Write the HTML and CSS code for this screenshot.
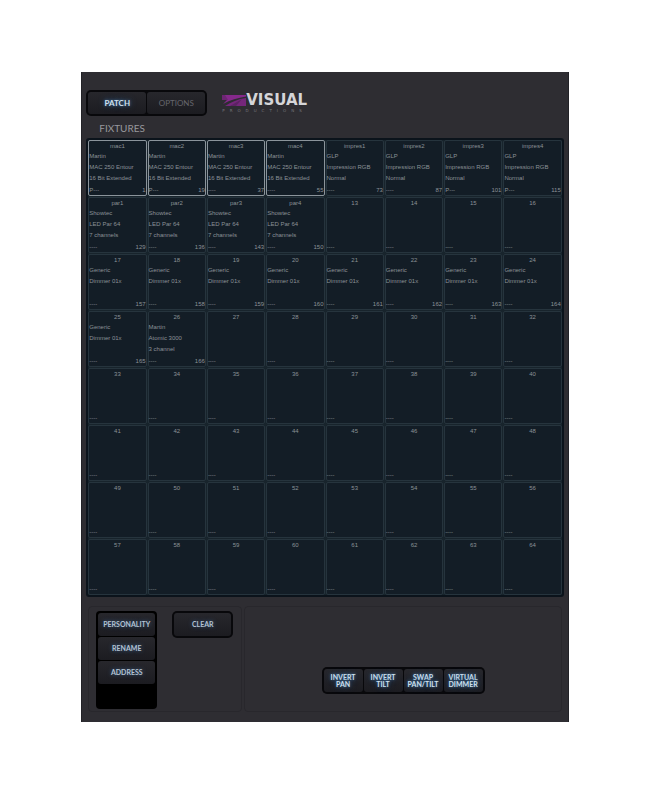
FILE: index.html
```
<!DOCTYPE html>
<html lang="en">
<head>
    <meta charset="UTF-8">
    <meta name="viewport" content="width=device-width, initial-scale=1.0">
    <title>Visual Productions - Patch</title>
    <link rel="stylesheet" href="styles.css">
</head>
<body>

<main class="app">
    <header class="topbar">
        <nav class="tabs">
            <button type="button" class="key lit">PATCH</button>
            <button type="button" class="key dim">OPTIONS</button>
        </nav>
        <div class="logo">
            <div class="logo-top">
                <svg class="logo-mark" viewBox="0 0 24 11" aria-hidden="true">
                    <path d="M0 0H24V1.500C16 3 8 5 1 9L5 5H0Z" fill="#85298b"/>
                    <path d="M0 0H3L6 5H0Z" fill="#6d2673"/>
                    <path d="M3 11C9 7 16 4 24 3V11Z" fill="#75277b"/>
                    <path d="M8 11L20 4L14 11Z" fill="#5c2362"/>
                </svg>
                <span class="logo-name">VISUAL</span>
            </div>
            <div class="logo-sub">PRODUCTIONS</div>
        </div>
    </header>

    <h1 class="title">FIXTURES</h1>
    <div class="grid" id="grid"></div>

    <section class="controls">
        <div class="panel edit">
            <div class="stack">
                <button type="button" class="key">PERSONALITY</button>
                <button type="button" class="key">RENAME</button>
                <button type="button" class="key">ADDRESS</button>
            </div>
            <div class="single">
                <button type="button" class="key">CLEAR</button>
            </div>
        </div>
        <div class="panel flags">
            <div class="row">
                <button type="button" class="key lit">INVERT<br>PAN</button>
                <button type="button" class="key lit">INVERT<br>TILT</button>
                <button type="button" class="key lit">SWAP<br>PAN/TILT</button>
                <button type="button" class="key lit">VIRTUAL<br>DIMMER</button>
            </div>
        </div>
    </section>
</main>

<script src="script.js"></script>
</body>
</html>
```
FILE: styles.css
```
* {
    box-sizing: border-box;
}
body {
    margin: 0;
    background: #fff;
    font-family: Lato, "Open Sans", sans-serif;
}
button {
    margin: 0;
    padding: 0;
    border: none;
    font-family: inherit;
    cursor: pointer;
}
.app {
    width: 75%;
    margin: 72px auto;
    padding: 18px 4px 10px;
    background: #2e2d32;
    border: solid #222227;
    border-width: 0 1px;
}

/* top bar */
.topbar {
    display: flex;
    align-items: center;
    gap: 15px;
}
.tabs, .row {
    display: flex;
    gap: 1px;
    padding: 2px;
    background: #08080b;
    border-radius: 5px;
}
.key {
    height: 23px;
    background: linear-gradient(#27272c, #1c1c21);
    border-radius: 3px;
    color: #b4c2d2;
    font-size: 7px;
    font-weight: bold;
    line-height: 7px;
    text-shadow: 0 0 4px #3a6090;
}
.tabs .key {
    width: 58px;
    height: 22px;
    font-size: 8px;
}
.key.lit {
    color: #cfe0ef;
    text-shadow: 0 0 3px #47759f, 0 0 6px #2f5688;
}
.tabs .key.dim {
    color: #66666d;
    font-weight: normal;
    font-size: 8px;
    text-shadow: none;
}
.logo-top {
    display: flex;
    align-items: center;
    height: 14px;
}
.logo-mark {
    width: 24px;
    height: 11px;
}
.logo-name {
    color: #d5d5d8;
    font: bold 15px/14px "DejaVu Sans", sans-serif;
}
.logo-sub {
    margin-top: 1px;
    color: #77777c;
    font: 4px/5px "DejaVu Sans", sans-serif;
    letter-spacing: 5px;
}
.title {
    margin: 6px 0 4px 13px;
    color: #98989d;
    font-size: 10px;
    font-weight: normal;
    line-height: 12px;
}

/* fixture cells */
.grid {
    display: grid;
    grid-template-columns: repeat(8, minmax(0, 1fr));
    gap: 1px;
    background: #18242c;
    border: 2px solid #0b131b;
    border-radius: 3px;
}
.cell {
    display: flex;
    flex-direction: column;
    height: 56px;
    background: #131d26;
    border: 1px solid #26343d;
    border-radius: 2px;
    color: #8b9297;
    font: 6px/11px "Liberation Sans", Arial, sans-serif;
    text-align: left;
    white-space: nowrap;
}
.cell.selected {
    border-color: #8b949b;
}
.cell-name {
    line-height: 10px;
    text-align: center;
}
.cell-foot {
    display: flex;
    justify-content: space-between;
    margin-top: auto;
    line-height: 10px;
}

/* bottom panels */
.controls {
    display: grid;
    grid-template-columns: 155fr 319fr;
    gap: 2px;
    margin: 9px 2px 0;
}
.panel {
    display: flex;
    height: 106px;
    border: 1px solid #28272c;
    border-radius: 4px;
}
.edit {
    align-items: flex-start;
    gap: 15px;
    padding: 4px 7px;
}
.stack {
    display: flex;
    flex-direction: column;
    gap: 1px;
    width: 61px;
    height: 98px;
    padding: 2px;
    background: #000;
    border-radius: 4px;
}
.single {
    display: flex;
    width: 61px;
    padding: 2px;
    background: #08080b;
    border-radius: 5px;
}
.single .key {
    flex: 1;
}
.flags {
    align-items: flex-end;
    justify-content: center;
    padding-bottom: 17px;
}
.row .key {
    width: 39px;
}
```
FILE: script.js
```
const mac = ['Martin', 'MAC 250 Entour', '16 Bit Extended'];
const impression = ['GLP', 'Impression RGB', 'Normal'];
const par = ['Showtec', 'LED Par 64', '7 channels'];
const dimmer = ['Generic', 'Dimmer 01x'];

// slot number -> patched fixture
const fixtures = {
    1: { name: 'mac1', lines: mac, address: 1, flags: 'P---', selected: true },
    2: { name: 'mac2', lines: mac, address: 19, flags: 'P---', selected: true },
    3: { name: 'mac3', lines: mac, address: 37, selected: true },
    4: { name: 'mac4', lines: mac, address: 55, selected: true },
    5: { name: 'impres1', lines: impression, address: 73 },
    6: { name: 'impres2', lines: impression, address: 87 },
    7: { name: 'impres3', lines: impression, address: 101, flags: 'P---' },
    8: { name: 'impres4', lines: impression, address: 115, flags: 'P---' },
    9: { name: 'par1', lines: par, address: 129 },
    10: { name: 'par2', lines: par, address: 136 },
    11: { name: 'par3', lines: par, address: 143 },
    12: { name: 'par4', lines: par, address: 150 },
    26: { lines: ['Martin', 'Atomic 3000', '3 channel'], address: 166 }
};
for (let i = 17; i <= 25; i++) {
    fixtures[i] = { lines: dimmer, address: 140 + i };
}

function addText(parent, className, text) {
    const span = document.createElement('span');
    span.className = className;
    span.textContent = text;
    parent.appendChild(span);
}

const grid = document.getElementById('grid');
for (let i = 1; i <= 64; i++) {
    const fixture = fixtures[i] || {};
    const cell = document.createElement('button');
    cell.type = 'button';
    cell.className = fixture.selected ? 'cell selected' : 'cell';
    addText(cell, 'cell-name', fixture.name || i);
    (fixture.lines || []).forEach(line => addText(cell, 'cell-line', line));

    const foot = document.createElement('span');
    foot.className = 'cell-foot';
    addText(foot, 'cell-flags', fixture.flags || '----');
    addText(foot, 'cell-address', fixture.address || '');
    cell.appendChild(foot);
    grid.appendChild(cell);
}
```
